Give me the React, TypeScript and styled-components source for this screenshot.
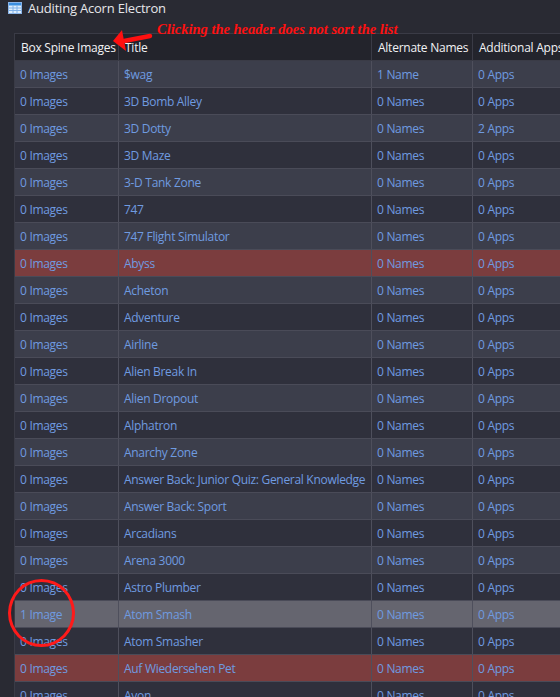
import styled, { createGlobalStyle } from "styled-components";

type Tone = "error" | "selected";

type Row = {
  images: string;
  title: string;
  names: string;
  apps: string;
  tone?: Tone;
};

const titles = [
  "$wag",
  "3D Bomb Alley",
  "3D Dotty",
  "3D Maze",
  "3-D Tank Zone",
  "747",
  "747 Flight Simulator",
  "Abyss",
  "Acheton",
  "Adventure",
  "Airline",
  "Alien Break In",
  "Alien Dropout",
  "Alphatron",
  "Anarchy Zone",
  "Answer Back: Junior Quiz: General Knowledge",
  "Answer Back: Sport",
  "Arcadians",
  "Arena 3000",
  "Astro Plumber",
  "Atom Smash",
  "Atom Smasher",
  "Auf Wiedersehen Pet",
  "Avon",
];

const rows: Row[] = titles.map((title) => ({
  images: title === "Atom Smash" ? "1 Image" : "0 Images",
  title,
  names: title === "$wag" ? "1 Name" : "0 Names",
  apps: title === "3D Dotty" ? "2 Apps" : "0 Apps",
  tone:
    title === "Abyss" || title === "Auf Wiedersehen Pet"
      ? "error"
      : title === "Atom Smash"
      ? "selected"
      : undefined,
}));

const GlobalStyle = createGlobalStyle`
  html, body {
    margin: 0;
    padding: 0;
    background: #292a33;
    overflow: hidden;
  }
  body {
    font-family: "Open Sans", "Noto Sans", sans-serif;
  }
`;

const App = () => {
  return (
    <>
      <GlobalStyle />
      <$Window>
        <$TitleBar>
          <GridIcon />
          <$TitleText>Auditing Acorn Electron</$TitleText>
        </$TitleBar>
        <$Note>Clicking the header does not sort the list</$Note>
        <$Arrow width="45" height="26" viewBox="0 0 45 26">
          <path d="M14 14 L40 9" stroke="#ff1010" strokeWidth="4.5" strokeLinecap="round" />
          <path d="M3 14 L12 3 L16 24 Z" fill="#ff1010" />
        </$Arrow>
        <$Table>
          <$HeaderRow>
            <$HeadCell>Box Spine Images</$HeadCell>
            <$HeadCell>Title</$HeadCell>
            <$HeadCell>Alternate Names</$HeadCell>
            <$HeadCell>Additional Apps</$HeadCell>
          </$HeaderRow>
          {rows.map((row, i) => (
            <$Row key={row.title} $odd={i % 2 === 0} $tone={row.tone}>
              <$Cell>{row.images}</$Cell>
              <$Cell>{row.title}</$Cell>
              <$Cell>{row.names}</$Cell>
              <$Cell>{row.apps}</$Cell>
            </$Row>
          ))}
        </$Table>
        <$Circle />
      </$Window>
    </>
  );
};

const GridIcon = () => (
  <svg width="14" height="12" viewBox="0 0 14 12">
    <rect x="0.5" y="0.5" width="13" height="11" fill="#dfeefc" stroke="#8ab4e8" />
    <rect x="1" y="1" width="12" height="2.5" fill="#3b8fe0" />
    <path d="M1 6 H13 M1 8.5 H13 M5 3.5 V11 M9 3.5 V11" stroke="#7fb0e8" strokeWidth="1" />
  </svg>
);

const $Window = styled.div`
  position: relative;
  width: 560px;
  height: 697px;
  overflow: hidden;
  background: #292a33;
`;

const $TitleBar = styled.div`
  display: flex;
  align-items: center;
  gap: 6px;
  height: 16px;
  padding: 0 0 0 8px;
`;

const $TitleText = styled.span`
  color: #e6e6ea;
  font-size: 13px;
  line-height: 16px;
  letter-spacing: -0.2px;
`;

const $Note = styled.div`
  position: absolute;
  left: 157px;
  top: 21px;
  color: #ff1010;
  font-family: "Liberation Serif", "DejaVu Serif", serif;
  font-weight: bold;
  font-style: italic;
  font-size: 14.5px;
  line-height: 16px;
  white-space: nowrap;
`;

const $Arrow = styled.svg`
  position: absolute;
  left: 110px;
  top: 27px;
  z-index: 2;
`;

const $Table = styled.div`
  margin: 17px 0 0 14px;
  width: 640px;
  border-top: 1px solid #3a3b46;
  border-left: 1px solid #3a3b46;
`;

const columns = "104px 253px 101px 182px";

const $HeaderRow = styled.div`
  display: grid;
  grid-template-columns: ${columns};
  height: 26px;
  background: #23242c;
  border-bottom: 1px solid #3a3b46;
`;

const $HeadCell = styled.div`
  display: flex;
  align-items: center;
  padding-left: 6px;
  color: #f2f2f4;
  font-size: 12px;
  letter-spacing: -0.25px;
  white-space: nowrap;
  overflow: hidden;
  border-right: 1px solid #3a3b46;
`;

const rowBg = (odd: boolean, tone?: Tone) =>
  tone === "error" ? "#7b3d3e" : tone === "selected" ? "#65656f" : odd ? "#3c3e4b" : "#2f303c";

const $Row = styled.div<{ $odd: boolean; $tone?: Tone }>`
  display: grid;
  grid-template-columns: ${columns};
  height: 26px;
  background: ${(p) => rowBg(p.$odd, p.$tone)};
  border-bottom: 1px solid #4a4b58;
`;

const $Cell = styled.div`
  display: flex;
  align-items: center;
  padding-left: 5px;
  color: #6f9be0;
  font-size: 12px;
  letter-spacing: -0.3px;
  white-space: nowrap;
  overflow: hidden;
  border-right: 1px solid #4e4f5c;
`;

const $Circle = styled.div`
  position: absolute;
  left: 8px;
  top: 579px;
  width: 61px;
  height: 62px;
  border: 3px solid #ff1a1a;
  border-radius: 50%;
  pointer-events: none;
`;

export default App;
